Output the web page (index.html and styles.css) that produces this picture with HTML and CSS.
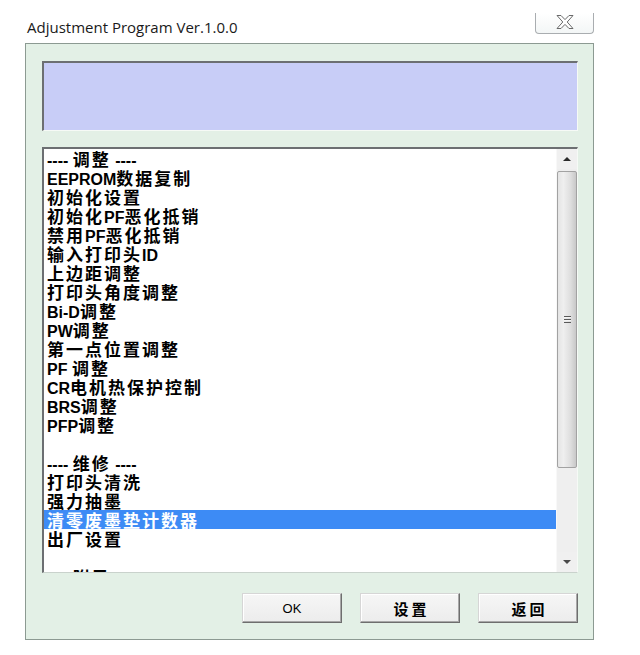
FILE: index.html
```html
<!DOCTYPE html>
<html lang="zh-CN">
<head>
<meta charset="utf-8">
<title>Adjustment Program Ver.1.0.0</title>
<link rel="stylesheet" href="styles.css">
</head>
<body>
<div class="titlebar">
  <div class="title">Adjustment Program Ver.1.0.0</div>
  <div class="close">
    <svg width="18" height="14" viewBox="0 0 18 14"><polygon points="1,0.5 5,0.5 9,4.6 13,0.5 17,0.5 11.2,7 17,13.5 13,13.5 9,9.4 5,13.5 1,13.5 6.8,7" fill="#fff" stroke="#6a6a6a" stroke-width="1" stroke-linejoin="round"/></svg>
  </div>
</div>
<div class="panel">
  <div class="status"></div>
  <div class="listbox">
    <ul class="items">
      <li>---- <span class="zh">调整</span> ----</li>
      <li>EEPROM<span class="zh">数据复制</span></li>
      <li><span class="zh">初始化设置</span></li>
      <li><span class="zh">初始化</span>PF<span class="zh">恶化抵销</span></li>
      <li><span class="zh">禁用</span>PF<span class="zh">恶化抵销</span></li>
      <li><span class="zh">输入打印头</span>ID</li>
      <li><span class="zh">上边距调整</span></li>
      <li><span class="zh">打印头角度调整</span></li>
      <li>Bi-D<span class="zh">调整</span></li>
      <li>PW<span class="zh">调整</span></li>
      <li><span class="zh">第一点位置调整</span></li>
      <li>PF <span class="zh">调整</span></li>
      <li>CR<span class="zh">电机热保护控制</span></li>
      <li>BRS<span class="zh">调整</span></li>
      <li>PFP<span class="zh">调整</span></li>
      <li>&nbsp;</li>
      <li>---- <span class="zh">维修</span> ----</li>
      <li><span class="zh">打印头清洗</span></li>
      <li><span class="zh">强力抽墨</span></li>
      <li class="selected"><span class="zh">清零废墨垫计数器</span></li>
      <li><span class="zh">出厂设置</span></li>
      <li>&nbsp;</li>
      <li>---- <span class="zh">附录</span> ----</li>
    </ul>
    <div class="scrollbar">
      <div class="sb-btn"><span class="arrow-up"></span></div>
      <div class="sb-thumb"><span class="grip"></span></div>
      <div class="sb-track"></div>
      <div class="sb-btn"><span class="arrow-down"></span></div>
    </div>
  </div>
  <div class="buttons">
    <button class="btn btn-en">OK</button>
    <button class="btn btn-zh">设置</button>
    <button class="btn btn-zh">返回</button>
  </div>
</div>
</body>
</html>
```
FILE: styles.css
```css
html, body {
  margin: 0;
  padding: 0;
  background: #ffffff;
}
body {
  width: 640px;
  height: 655px;
  overflow: hidden;
  font-family: "Liberation Sans", "Noto Sans CJK SC", sans-serif;
}
.titlebar {
  display: flex;
  justify-content: space-between;
  align-items: flex-start;
  height: 43px;
  padding: 0 46px 0 27px;
}
.title {
  margin-top: 17px;
  font-family: "Open Sans", "Noto Sans", sans-serif;
  font-size: 15px;
  line-height: 20px;
  color: #1a1a1a;
}
.close {
  margin-top: 13px;
  width: 57px;
  height: 20px;
  border: 1px solid #a9adb0;
  border-top: none;
  border-radius: 0 0 4px 4px;
  background: linear-gradient(#ffffff, #f3f6f6);
  display: flex;
  align-items: center;
  justify-content: center;
}
.close svg {
  display: block;
  margin-top: -2px;
}
.panel {
  margin-left: 25px;
  width: 536px;
  height: 578px;
  border: 1px solid #8c9a92;
  background: #e3f0e6;
  padding: 17px 15px 0 16px;
}
.status {
  height: 67px;
  background: #c8cdf7;
  border-top: 2px solid #6c6f72;
  border-left: 2px solid #6c6f72;
  border-right: 1px solid #f6faf6;
  border-bottom: 1px solid #f6faf6;
}
.listbox {
  margin-top: 16px;
  height: 423px;
  background: #ffffff;
  border-top: 2px solid #6c6f72;
  border-left: 2px solid #6c6f72;
  border-right: 1px solid #f6faf6;
  border-bottom: 1px solid #c9d2cc;
  display: flex;
  overflow: hidden;
}
.items {
  flex: 1;
  margin: 0;
  padding: 0;
  list-style: none;
  overflow: hidden;
  font-weight: bold;
  font-size: 16px;
  line-height: 19px;
  color: #000;
}
.items li {
  height: 19px;
  padding-left: 3px;
  white-space: nowrap;
}
.items li.selected {
  background: #3d8bf5;
  color: #ffffff;
}
.zh {
  font-family: "Noto Sans CJK SC", sans-serif;
  font-size: 17px;
  letter-spacing: 2px;
  font-weight: bold;
}
.scrollbar {
  width: 20px;
  display: flex;
  flex-direction: column;
  background: #eeeeee;
  border-left: 1px solid #f8f8f8;
}
.sb-btn {
  height: 20px;
  display: flex;
  align-items: center;
  justify-content: center;
  background: #f0f0f0;
}
.arrow-up {
  width: 0;
  height: 0;
  border-left: 4px solid transparent;
  border-right: 4px solid transparent;
  border-bottom: 4px solid #2a2a2a;
}
.arrow-down {
  width: 0;
  height: 0;
  border-left: 4px solid transparent;
  border-right: 4px solid transparent;
  border-top: 4px solid #4a4a4a;
}
.sb-thumb {
  margin-top: 2px;
  height: 295px;
  border: 1px solid #a2a2a2;
  border-radius: 2px;
  background: linear-gradient(to right, #e4e4e4, #efefef 30%, #dedede 70%, #c8c8c8);
  display: flex;
  align-items: center;
  justify-content: center;
}
.grip {
  width: 7px;
  height: 7px;
  background: repeating-linear-gradient(#5a5a5a 0 1px, #f4f4f4 1px 2px, transparent 2px 3px);
}
.sb-track {
  flex: 1;
  background: #efefef;
}
.buttons {
  display: flex;
  justify-content: flex-end;
  gap: 18px;
  margin-top: 20px;
  padding-right: 0;
}
.btn {
  width: 100px;
  height: 30px;
  margin: 0;
  padding: 0;
  background: linear-gradient(#f6f6f6, #ececec);
  border: 1px solid;
  border-color: #d6d6d6 #6e6e6e #6e6e6e #d6d6d6;
  box-shadow: inset -1px -1px 0 #a8a8a8, inset 1px 1px 0 #ffffff;
  color: #000;
}
.btn-en {
  font-family: "Liberation Sans", sans-serif;
  font-size: 13px;
}
.btn-zh {
  font-family: "Noto Sans CJK SC", sans-serif;
  font-size: 15px;
  font-weight: bold;
  letter-spacing: 3px;
  text-indent: 3px;
}
```
